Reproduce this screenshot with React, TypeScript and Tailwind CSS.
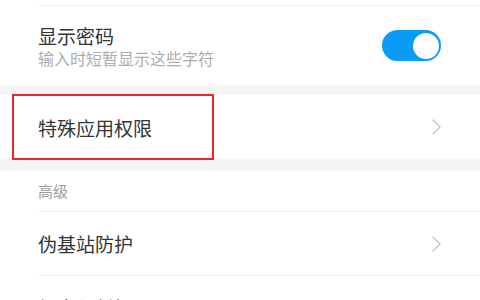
export default function App() {
  return (
    <div
      className="w-[480px] h-[300px] overflow-hidden bg-white"
      style={{ fontFamily: '"Noto Sans CJK SC", "Noto Sans", sans-serif' }}
    >
      <div className="h-[5px]" />
      <div className="ml-[38px] h-px bg-[#ededed]" />

      {/* 显示密码 */}
      <div className="flex h-[79px] items-center pl-[38px] pr-[39px]">
        <div className="flex flex-1 flex-col gap-[1px] pt-[1px]">
          <p className="text-[19px] leading-[23px] text-[#333]">显示密码</p>
          <p className="text-[16px] leading-[20px] text-[#adadad]">输入时短暂显示这些字符</p>
        </div>
        <div className="flex h-[31px] w-[59px] items-center justify-end rounded-full bg-[#0a9bf7] pr-[2.5px]">
          <div className="h-[26px] w-[26px] rounded-full bg-white" />
        </div>
      </div>

      <div className="h-[10px] bg-[#f5f5f5]" />

      {/* 特殊应用权限 */}
      <div className="relative flex h-[64px] items-center pl-[38px] pr-[39px]">
        <p className="flex-1 pt-[3px] text-[19px] text-[#333]">特殊应用权限</p>
        <Chevron />
        <div className="absolute left-[12px] top-[-1px] h-[66px] w-[202px] border-2 border-[#e8262d]" />
      </div>

      <div className="h-[12px] bg-[#f5f5f5]" />

      {/* 高级 */}
      <div className="flex h-[40px] items-center pl-[38px]">
        <p className="text-[15px] text-[#9a9a9a]">高级</p>
      </div>
      <div className="ml-[38px] h-px bg-[#ededed]" />

      <div className="flex h-[63px] items-center pl-[38px] pr-[39px]">
        <p className="flex-1 pt-[2px] text-[19px] text-[#333]">伪基站防护</p>
        <Chevron />
      </div>
      <div className="ml-[38px] h-px bg-[#ededed]" />

      <div className="flex h-[63px] items-center pl-[38px] pr-[39px]">
        <p className="flex-1 pt-[2px] text-[19px] text-[#333]">加密与凭据</p>
        <Chevron />
      </div>
    </div>
  )
}

function Chevron() {
  return (
    <svg width="9" height="16" viewBox="0 0 9 16" fill="none">
      <path d="M1 1l7 7-7 7" stroke="#c4c4c4" strokeWidth="1.4" strokeLinecap="round" strokeLinejoin="round" />
    </svg>
  )
}
